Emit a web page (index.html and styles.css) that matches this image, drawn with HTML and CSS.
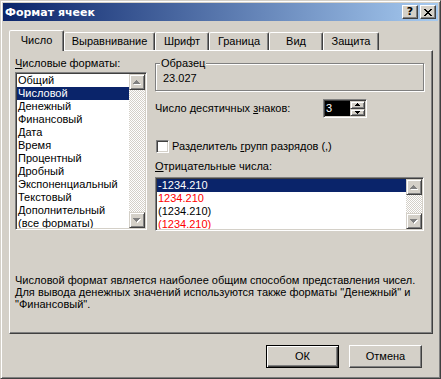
FILE: index.html
```html
<!DOCTYPE html>
<html lang="ru">
<head>
  <meta charset="UTF-8" />
  <meta name="viewport" content="width=device-width, initial-scale=1.0"/>
  <title>Формат ячеек</title>
  <link rel="stylesheet" href="styles.css">
</head>

<body>
  <svg class="defs" width="0" height="0">
    <symbol id="arr-up" viewBox="0 0 8 5">
      <path fill="#fff" d="M4 1h1v1H4zM3 2h3v1H3zM2 3h5v1H2zM1 4h7v1H1z"/>
      <path fill="#808080" d="M3 0h1v1H3zM2 1h3v1H2zM1 2h5v1H1zM0 3h7v1H0z"/>
    </symbol>
    <symbol id="arr-down" viewBox="0 0 8 5">
      <path fill="#fff" d="M1 1h7v1H1zM2 2h5v1H2zM3 3h3v1H3zM4 4h1v1H4z"/>
      <path fill="#808080" d="M0 0h7v1H0zM1 1h5v1H1zM2 2h3v1H2zM3 3h1v1H3z"/>
    </symbol>
    <symbol id="spin-up" viewBox="0 0 5 3">
      <path fill="#000" d="M2 0h1v1H2zM1 1h3v1H1zM0 2h5v1H0z"/>
    </symbol>
    <symbol id="spin-down" viewBox="0 0 5 3">
      <path fill="#000" d="M0 0h5v1H0zM1 1h3v1H1zM2 2h1v1H2z"/>
    </symbol>
  </svg>

  <div class="window">
    <div class="titlebar">
      <span class="title">Формат ячеек</span>
      <div class="caption-btns">
        <span class="cap-btn help">?</span>
        <span class="cap-btn">
          <svg width="8" height="7" viewBox="0 0 8 7" shape-rendering="crispEdges">
            <path fill="#000" d="M0 0h2v1H0zM6 0h2v1H6zM1 1h2v1H1zM5 1h2v1H5zM2 2h4v1H2zM3 3h2v1H3zM2 4h4v1H2zM1 5h2v1H1zM5 5h2v1H5zM0 6h2v1H0zM6 6h2v1H6z"/>
          </svg>
        </span>
      </div>
    </div>

    <div class="tabs">
      <div class="tab active">Число</div>
      <div class="tab">Выравнивание</div>
      <div class="tab">Шрифт</div>
      <div class="tab">Граница</div>
      <div class="tab">Вид</div>
      <div class="tab">Защита</div>
    </div>

    <div class="panel">
      <div class="columns">
        <div class="col-left">
          <div class="label"><u>Ч</u>исловые форматы:</div>
          <div class="listbox formats">
            <ul class="items">
              <li>Общий</li>
              <li class="selected">Числовой</li>
              <li>Денежный</li>
              <li>Финансовый</li>
              <li>Дата</li>
              <li>Время</li>
              <li>Процентный</li>
              <li>Дробный</li>
              <li>Экспоненциальный</li>
              <li>Текстовый</li>
              <li>Дополнительный</li>
              <li>(все форматы)</li>
            </ul>
            <div class="scrollbar">
              <span class="sb-btn"><svg width="8" height="5"><use href="#arr-up"/></svg></span>
              <span class="sb-track"></span>
              <span class="sb-btn"><svg width="8" height="5"><use href="#arr-down"/></svg></span>
            </div>
          </div>
        </div>

        <div class="col-right">
          <fieldset class="group">
            <legend>Образец</legend>
            <div class="sample">23.027</div>
          </fieldset>

          <div class="decimals">
            <span>Число десятичных <u>з</u>наков:</span>
            <div class="spin">
              <span class="spin-edit">3</span>
              <div class="spin-btns">
                <span class="spin-btn"><svg width="5" height="3"><use href="#spin-up"/></svg></span>
                <span class="spin-btn"><svg width="5" height="3"><use href="#spin-down"/></svg></span>
              </div>
            </div>
          </div>

          <div class="check">
            <span class="box"></span>
            <span>Разделитель <u>г</u>рупп разрядов (,)</span>
          </div>

          <div class="label neg-label"><u>О</u>трицательные числа:</div>
          <div class="listbox negatives">
            <ul class="items">
              <li class="selected">-1234.210</li>
              <li class="red">1234.210</li>
              <li>(1234.210)</li>
              <li class="red">(1234.210)</li>
            </ul>
            <div class="scrollbar">
              <span class="sb-btn"><svg width="8" height="5"><use href="#arr-up"/></svg></span>
              <span class="sb-track"></span>
              <span class="sb-btn"><svg width="8" height="5"><use href="#arr-down"/></svg></span>
            </div>
          </div>
        </div>
      </div>

      <p class="desc">
        Числовой формат является наиболее общим способом представления чисел.<br>
        Для вывода денежных значений используются также форматы "Денежный" и<br>
        "Финансовый".
      </p>
    </div>

    <div class="buttons">
      <button class="btn default">ОК</button>
      <button class="btn">Отмена</button>
    </div>
  </div>
</body>
</html>
```

FILE: styles.css
```css
:root {
  --face: #d4d0c8;
  --light: #fff;
  --shadow: #808080;
  --dark: #404040;
  --hilite: #0a246a;
}

* { box-sizing: border-box; }

html, body { margin: 0; }

body {
  background: var(--face);
  font-family: "Liberation Sans", Arial, sans-serif;
  font-size: 11px;
  line-height: 13px;
  color: #000;
}

.defs { position: absolute; }

.window {
  width: 441px;
  height: 379px;
  display: flex;
  flex-direction: column;
  padding: 2px;
  background: var(--face);
  border: 1px solid;
  border-color: var(--face) var(--dark) var(--dark) var(--face);
  box-shadow: inset 1px 1px var(--light), inset -1px -1px var(--shadow);
}

/* title bar */
.titlebar {
  height: 18px;
  flex: none;
  display: flex;
  align-items: center;
  justify-content: space-between;
  padding: 0 2px 0 2px;
  background: linear-gradient(to right, #0a246a, #a6caf0);
}

.title {
  color: #fff;
  font-family: "DejaVu Sans", sans-serif;
  font-weight: bold;
  font-size: 11px;
}

.caption-btns { display: flex; gap: 2px; }

.cap-btn {
  width: 16px;
  height: 14px;
  display: flex;
  align-items: center;
  justify-content: center;
  background: var(--face);
  border: 1px solid;
  border-color: var(--light) var(--dark) var(--dark) var(--light);
  box-shadow: inset -1px -1px var(--shadow);
}

.cap-btn.help {
  font-family: "DejaVu Sans", sans-serif;
  font-weight: bold;
  font-size: 11px;
  line-height: 12px;
}

/* tabs */
.tabs {
  height: 20px;
  flex: none;
  display: flex;
  align-items: flex-end;
  margin-top: 9px;
  padding-left: 6px;
}

.tab {
  height: 18px;
  padding-top: 2px;
  text-align: center;
  background: var(--face);
  border: 1px solid;
  border-bottom: 0;
  border-color: var(--light) var(--dark) transparent var(--light);
  border-radius: 2px 2px 0 0;
  box-shadow: inset -1px 0 var(--shadow);
}

.tab.active {
  height: 21px;
  padding-top: 3px;
  margin-bottom: -1px;
  position: relative;
  z-index: 1;
}

.tab:nth-child(1) { width: 55px; }
.tab:nth-child(2) { width: 91px; }
.tab:nth-child(3) { width: 54px; }
.tab:nth-child(4) { width: 60px; }
.tab:nth-child(5) { width: 54px; }
.tab:nth-child(6) { width: 56px; }

/* panel */
.panel {
  height: 284px;
  flex: none;
  margin: 0 5px 0 6px;
  padding: 6px 7px 0 5px;
  border: 1px solid;
  border-color: var(--light) var(--dark) var(--dark) var(--light);
  box-shadow: inset -1px -1px var(--shadow);
}

.columns {
  height: 173px;
  display: grid;
  grid-template-columns: 132px 269px;
  column-gap: 8px;
}

.col-left, .col-right {
  display: flex;
  flex-direction: column;
}

.label { height: 13px; }

/* list boxes */
.listbox {
  display: flex;
  padding: 1px;
  background: #fff;
  border: 1px solid;
  border-color: var(--shadow) var(--light) var(--light) var(--shadow);
  box-shadow: inset 1px 1px var(--dark), inset -1px -1px var(--face);
}

.formats { height: 158px; margin-top: 2px; }
.negatives { height: 54px; margin-top: 4px; }

.items {
  flex: 1;
  margin: 0;
  padding: 0;
  list-style: none;
  overflow: hidden;
}

.items li {
  height: 13px;
  padding-left: 1px;
  white-space: nowrap;
}

.items li.selected { background: var(--hilite); color: #fff; }
.items li.red { color: #f00; }

.scrollbar {
  width: 16px;
  display: flex;
  flex-direction: column;
}

.sb-btn {
  height: 16px;
  flex: none;
  display: flex;
  align-items: center;
  justify-content: center;
  background: var(--face);
  border: 1px solid;
  border-color: var(--face) var(--dark) var(--dark) var(--face);
  box-shadow: inset 1px 1px var(--light), inset -1px -1px var(--shadow);
}

.sb-btn svg, .spin-btn svg { display: block; }

.sb-track {
  flex: 1;
  background: repeating-conic-gradient(var(--face) 0 25%, #fff 0 50%) 0 0 / 2px 2px;
}

/* sample group */
.group {
  margin: 0;
  padding: 2px 6px 5px 7px;
  min-width: 0;
  border: 1px solid var(--shadow);
  box-shadow: inset 1px 1px var(--light), 1px 1px var(--light);
}

.group legend {
  margin-left: -3px;
  padding: 0 1px;
  line-height: 13px;
  background: var(--face);
}

.sample { height: 13px; }

/* decimals spinner */
.decimals {
  display: grid;
  grid-template-columns: 168px 44px;
  align-items: center;
  margin-top: 8px;
}

.spin {
  height: 19px;
  display: flex;
  padding: 1px;
  border: 1px solid;
  border-color: var(--shadow) var(--light) var(--light) var(--shadow);
  box-shadow: inset 1px 1px var(--dark), inset -1px -1px var(--face);
  background: #fff;
}

.spin-edit {
  flex: 1;
  background: #000;
  color: #fff;
  padding-left: 1px;
  line-height: 15px;
}

.spin-btns {
  width: 15px;
  display: flex;
  flex-direction: column;
}

.spin-btn {
  flex: 1;
  display: flex;
  align-items: center;
  justify-content: center;
  background: var(--face);
  border: 1px solid;
  border-color: var(--face) var(--dark) var(--dark) var(--face);
  box-shadow: inset 1px 1px var(--light), inset -1px -1px var(--shadow);
}

/* checkbox */
.check {
  display: flex;
  align-items: center;
  gap: 3px;
  height: 13px;
  margin-top: 22px;
  padding-left: 1px;
}

.box {
  width: 13px;
  height: 13px;
  background: #fff;
  border: 1px solid;
  border-color: var(--shadow) var(--light) var(--light) var(--shadow);
  box-shadow: inset 1px 1px var(--dark), inset -1px -1px var(--face);
}

.neg-label { margin-top: 7px; }

/* description */
.desc {
  margin: 44px 0 0;
  line-height: 12px;
}

/* buttons */
.buttons {
  display: flex;
  justify-content: flex-end;
  gap: 10px;
  margin: 11px 5px 0 0;
  padding-right: 11px;
}

.btn {
  width: 73px;
  height: 23px;
  padding: 0;
  font: inherit;
  color: #000;
  background: var(--face);
  border: 1px solid;
  border-color: var(--light) var(--dark) var(--dark) var(--light);
  box-shadow: inset -1px -1px var(--shadow);
}

.btn.default {
  border-color: #000;
  box-shadow: inset 1px 1px var(--light), inset -1px -1px var(--dark), inset -2px -2px var(--shadow);
}
```
